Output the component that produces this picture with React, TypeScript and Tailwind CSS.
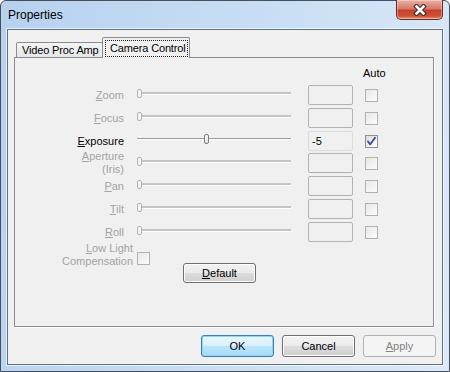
import React from 'react';

type Row = { key: string; label: React.ReactNode; enabled?: boolean; value?: string; auto?: boolean; thumb?: number; gap: string };

const Ul = ({ c }: { c: string }) => <span className="underline underline-offset-[1px]">{c}</span>;

const rows: Row[] = [
  { key: 'zoom', label: <><Ul c="Z" />oom</>, gap: 'mb-[3px]' },
  { key: 'focus', label: <><Ul c="F" />ocus</>, gap: 'mb-[3px]' },
  { key: 'exposure', label: <><Ul c="E" />xposure</>, enabled: true, value: '-5', auto: true, thumb: 67, gap: 'mb-[2px]' },
  { key: 'aperture', label: <><Ul c="A" />perture<br />(Iris)</>, gap: 'mb-[3px]' },
  { key: 'pan', label: <><Ul c="P" />an</>, gap: 'mb-[3px]' },
  { key: 'tilt', label: <><Ul c="T" />ilt</>, gap: 'mb-[3px]' },
  { key: 'roll', label: <><Ul c="R" />oll</>, gap: 'mb-0' },
];

const Slider = ({ enabled, thumb = 0 }: { enabled?: boolean; thumb?: number }) => (
  <div className="relative ml-[13px] h-[20px] w-[154px]">
    {enabled ? (
      <div className="absolute left-0 right-0 top-[7px] h-[2px] border-t border-[#9a9a9a] border-b border-b-white" />
    ) : (
      <div className="absolute left-0 right-0 top-[7px] h-[2px] bg-[#c4c4c4] shadow-[0_1px_0_#ffffff]" />
    )}
    <div
      className={
        enabled
          ? 'absolute top-[3px] h-[10px] w-[5px] rounded-[2px] border border-[#7d7d7d] bg-[linear-gradient(#fafafa,#e2e2e2)]'
          : 'absolute top-[4px] h-[9px] w-[5px] rounded-[2px] border border-[#b3b3b3] bg-[#f4f4f4]'
      }
      style={{ left: thumb }}
    />
  </div>
);

const Check = ({ checked, className = '' }: { checked?: boolean; className?: string }) => (
  <div
    className={
      'flex h-[13px] w-[13px] shrink-0 items-center justify-center border ' +
      (checked
        ? 'border-[#8e8f8f] bg-[linear-gradient(135deg,#dcdcdc,#ffffff)] '
        : 'border-[#b1b1b1] bg-[linear-gradient(135deg,#e8e8e8,#fbfbfb)] ') +
      className
    }
  >
    {checked && (
      <svg width="11" height="11" viewBox="0 0 11 11">
        <path d="M2 5.5 L4.3 8.3 L9 1.8" fill="none" stroke="#3b4f9e" strokeWidth="1.9" strokeLinecap="round" strokeLinejoin="round" />
      </svg>
    )}
  </div>
);

const Button = ({ children, kind = 'normal', className = '' }: { children: React.ReactNode; kind?: 'normal' | 'default' | 'disabled'; className?: string }) => {
  const look =
    kind === 'default'
      ? 'border-[#3c7fb1] bg-[linear-gradient(#eaf6fd,#d9f0fc_50%,#bee6fd_50%,#a7d9f5)] shadow-[inset_0_0_0_1px_#8fd3f8] text-black'
      : kind === 'disabled'
      ? 'border-[#adb2b5] bg-[#f4f4f4] text-[#838383]'
      : 'border-[#707070] bg-[linear-gradient(#f2f2f2,#ebebeb_50%,#dddddd_50%,#cfcfcf)] shadow-[inset_0_0_0_1px_#fcfcfc] text-black';
  return (
    <div className={'flex items-center justify-center rounded-[3px] border leading-[13px] ' + look + ' ' + className}>
      {children}
    </div>
  );
};

export default function App() {
  return (
    <div className="relative h-[372px] w-[450px] bg-white font-['Liberation_Sans',Arial,sans-serif] text-[11px] text-black">
      <div className="flex h-full w-full flex-col rounded-t-[6px] border border-[#46505c] bg-[linear-gradient(100deg,#b7d1ee,#c6dcf3_45%,#dbe9f8)] px-[6px] pb-[6px]">
        <div className="h-[28px] pl-[1px] pt-[7px] text-[12px] leading-[15px] text-black">Properties</div>

        <div className="flex flex-1 flex-col border border-[#5f7186] bg-[#f0f0f0] shadow-[0_0_0_1px_rgba(255,255,255,0.65)]">
          {/* tabs */}
          <div className="ml-[6px] mt-[7px] flex h-[20px] items-end pl-[2px]">
            <div className="h-[15px] w-[87px] whitespace-nowrap rounded-t-[2px] border border-b-0 border-[#898c95] bg-[linear-gradient(#f4f4f4,#e6e6e6)] pl-[5px] pt-px leading-[13px] tracking-[-0.15px]">
              Video Proc Amp
            </div>
            <div className="relative z-10 -mb-px -ml-px h-[21px] w-[88px] rounded-t-[2px] border border-b-0 border-[#898c95] bg-[#f0f0f0] pl-[2px] pr-[1px] pt-[2px]">
              <div className="h-[17px] whitespace-nowrap border border-dotted border-[#222] pl-[4px] pt-[1px] leading-[13px] tracking-[-0.15px]">Camera Control</div>
            </div>
          </div>

          {/* page */}
          <div className="ml-[6px] h-[270px] w-[420px] border border-[#898c95] bg-[#f0f0f0] shadow-[1px_1px_0_#ffffff]">
            <div className="h-[27px] pl-[348px] pt-[9px] leading-[13px]">Auto</div>

            {rows.map((r) => (
              <div key={r.key} className={'flex h-[20px] items-center ' + r.gap}>
                <div className={'w-[109px] text-right leading-[13px] ' + (r.enabled ? 'text-black' : 'text-[#a3a3a3]')}>{r.label}</div>
                <Slider enabled={r.enabled} thumb={r.thumb} />
                <div
                  className={
                    'ml-[17px] h-[20px] w-[45px] rounded-[2px] border pl-[3px] leading-[18px] ' +
                    (r.enabled ? 'border-[#d9dde3] bg-[#f0f0f0]' : 'border-[#b2b2b2] bg-[#f0f0f0]')
                  }
                >
                  {r.value}
                </div>
                <Check checked={r.auto} className="ml-[12px]" />
              </div>
            ))}

            <div className="flex items-start">
              <div className="w-[118px] text-right leading-[13px] text-[#a3a3a3]">
                <Ul c="L" />ow Light
                <br />
                Compensation
              </div>
              <Check className="ml-[4px] mt-[10px]" />
              <Button className="ml-[33px] mt-[21px] h-[20px] w-[73px]">
                <span>
                  <Ul c="D" />efault
                </span>
              </Button>
            </div>
          </div>

          {/* dialog buttons */}
          <div className="mt-[8px] flex justify-end gap-[8px] pr-[6px]">
            <Button kind="default" className="h-[22px] w-[73px]">OK</Button>
            <Button className="h-[22px] w-[73px]">Cancel</Button>
            <Button kind="disabled" className="h-[22px] w-[73px]">
              <span>
                <Ul c="A" />pply
              </span>
            </Button>
          </div>
        </div>
      </div>

      {/* caption close button */}
      <div className="absolute right-[7px] top-0 flex h-[20px] w-[47px] items-center justify-center rounded-b-[5px] border border-t-0 border-[#6e2a22] bg-[linear-gradient(#eab0a4,#d67a68_45%,#c4402c_55%,#cf5234_85%,#e69a7c)] shadow-[inset_0_0_0_1px_rgba(255,255,255,0.35)]">
        <svg width="14" height="12" viewBox="0 0 14 12">
          <path d="M3.5 2.5 L10.5 9.5 M10.5 2.5 L3.5 9.5" stroke="#3c2a28" strokeWidth="4.6" strokeLinecap="square" />
          <path d="M3.5 2.5 L10.5 9.5 M10.5 2.5 L3.5 9.5" stroke="#ffffff" strokeWidth="2.6" strokeLinecap="square" />
        </svg>
      </div>
    </div>
  );
}
